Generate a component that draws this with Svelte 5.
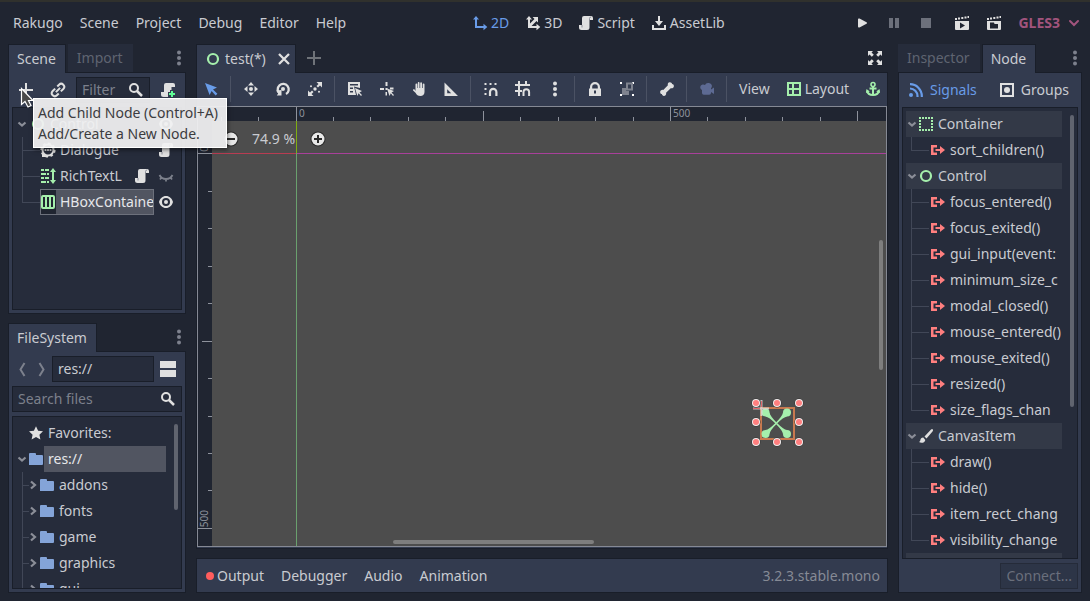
<script>
  const icons = {
    d2: '<path d="M4 1 1 4.500h2V13h8.500v2.200L15.300 12l-3.800-3.200V11H5V4.500h2z"/>',
    d3: '<path d="M4 1 1 4.500h2V13h8.500v2.200L15.300 12l-3.800-3.200V11H6.500L11.500 6 13 7.500V2H7.600L9.500 3.900 5 8.400V4.500h2z"/>',
    script: '<path d="M6 1a2 2 0 0 0-2 2v7H1v2.500A2.500 2.500 0 0 0 3.500 15H9a2.500 2.500 0 0 0 2.500-2.500V5H15V3a2 2 0 0 0-2-2z"/><path d="M11.500 5V3.500A1.500 1.500 0 0 1 13 2M4 10v2.500" fill="none" stroke="#8d909b"/>',
    scriptAdd: '<path d="M6 1a2 2 0 0 0-2 2v7H1v2.500A2.500 2.500 0 0 0 3.500 15H8v-5h2V8h1.500V5H15V3a2 2 0 0 0-2-2z"/><path d="M11 9h2v2h2v2h-2v2h-2v-2H9v-2h2z" fill="#5fff97"/>',
    asset: '<path d="M7 1h2v5h3l-4 5-4-5h3zM1 10h2v3h10v-3h2v5H1z"/>',
    play: '<path d="M4 4.500a1 1 0 0 1 1.500-.9l7 3.600a.9.900 0 0 1 0 1.600l-7 3.600a1 1 0 0 1-1.500-.900z"/>',
    pause: '<path d="M3 3h4v10H3zM9 3h4v10H9z"/>',
    stop: '<path d="M3 3h10v10H3z"/>',
    film: '<path d="M1 3h2v2H1zM4 2.500h2v2H4zM7.300 2h2v2h-2zM10.500 1.500h2v2h-2zM13.500 1H15v2h-1.500z"/><path fill-rule="evenodd" d="M1 6h14v8a1 1 0 0 1-1 1H2a1 1 0 0 1-1-1zm5 1.500v6l5-3z"/>',
    filmFolder: '<path d="M1 3h2v2H1zM4 2.500h2v2H4zM7.300 2h2v2h-2zM10.500 1.500h2v2h-2zM13.500 1H15v2h-1.500z"/><path fill-rule="evenodd" d="M1 6h14v8a1 1 0 0 1-1 1H2a1 1 0 0 1-1-1zm3 1.500v6h8V9H8.500L8 7.500z"/>',
    chevron: '<path d="m4 6 4 4 4-4" fill="none" stroke="currentColor" stroke-width="2" stroke-linecap="round"/>',
    dots: '<circle cx="8" cy="2.500" r="2"/><circle cx="8" cy="8" r="2"/><circle cx="8" cy="13.500" r="2"/>',
    add: '<path d="M7 1h2v6h6v2H9v6H7V9H1V7h6z"/>',
    close: '<path d="m3 3 10 10M13 3 3 13" stroke="currentColor" stroke-width="2.300"/>',
    link: '<g fill="none" stroke="currentColor" stroke-width="2" transform="rotate(-45 8 8)"><path d="M7 5H3.500a3 3 0 0 0 0 6H6M10 5h2.500a3 3 0 0 1 0 6H9M5 8h6"/></g>',
    search: '<circle cx="6" cy="6" r="4" fill="none" stroke="currentColor" stroke-width="2"/><path d="m9 9 5 5" stroke="currentColor" stroke-width="2.500"/>',
    select: '<path d="m2 2 4.600 12 2-4 4 4.500 1.800-1.800L10 8.500l4-2z"/>',
    move: '<path d="m8 1 3 3.500H5zM8 15l3-3.500H5zM1 8l3.500 3V5zM15 8l-3.500 3V5z"/><circle cx="8" cy="8" r="2"/>',
    rotate: '<path d="M4.600 12.500A5.500 5.500 0 1 1 11 13.100" fill="none" stroke="currentColor" stroke-width="2.300"/><path d="M1 9.500 6.500 9v5.500H1.800l1.400-1.900z"/><circle cx="8" cy="8" r="2"/>',
    scale: '<path d="M9.500 1H15v5.500l-2-2-2 2L9.500 5l2-2zM6.500 15H1V9.500l2 2 2-2L6.500 11l-2 2z"/><circle cx="8" cy="8" r="1.700"/><circle cx="12" cy="10.800" r="1"/><circle cx="4" cy="5.200" r="1"/>',
    list: '<path fill-rule="evenodd" d="M1 1h12v6l-6-1.500L9 14H1zm2 2v1.500h8V3zm0 3.500V8h3V6.500zM3 10v1.500h3V10z"/><path d="m8 7 2.300 8 1.300-2.700L14 15l1-1-2.500-2.500L15 10z"/>',
    pivot: '<path d="M6.500 1h2v4h-2zM1 7h4v2H1zM6.500 7h2v2h-2zM11 6.500h3.500v2H11zM6.500 11h1.500v3.500H6.500z"/><path d="m8 7.500 2.500 7.500 1.300-2.700L14 15l1-1-2.500-2.500L15 10z"/>',
    hand: '<path d="M7.500 1c.600 0 1 .4 1 1v5h.7V2.200a.9.900 0 0 1 1.800 0V7h.7V3.400a.9.900 0 0 1 1.800 0V11c0 2.500-1.800 4-4 4-2.700 0-3.700-1-5-3.200L2.100 9.500c-.6-1 .7-1.900 1.500-1L4.500 10V3.400a.9.900 0 0 1 1.800 0V7h.5V2c0-.6.300-1 .7-1z"/>',
    ruler: '<path fill-rule="evenodd" d="M1.500 1.500V15H15zm2.700 6.700 4 4h-4z"/>',
    snap: '<path d="M1.500 2h2v2h-2zM1.500 7h2v2h-2zM6.500 2h2v2h-2zM11.500 2h2v2h-2zM1.500 12h2v2h-2z"/><path d="M7 15v-4a3.200 3.200 0 0 1 6.400 0v4" fill="none" stroke="currentColor" stroke-width="2.200"/>',
    grid: '<path d="M3 0h2v3h5V0h2v3h3v2H5v4h2v2H5v4H3v-4H0V9h3V5H0V3h3z"/><path d="M8.500 15v-4a2.800 2.800 0 0 1 5.600 0v4" fill="none" stroke="currentColor" stroke-width="2"/>',
    lock: '<path fill-rule="evenodd" d="M8 1a5 5 0 0 0-5 5v1.500H2V15h12V7.500h-1V6a5 5 0 0 0-5-5zm0 2.200A2.800 2.800 0 0 1 10.800 6v1.500H5.200V6A2.800 2.800 0 0 1 8 3.200zM7 9.500h2v3H7z"/>',
    group: '<path d="M1 1h2v2H1zM13 1h2v2h-2zM1 13h2v2H1zM13 13h2v2h-2z" fill="#fff"/><path fill="#7f838f" d="M3 7h4v3h3v4H3z"/><path fill="none" stroke="#7f838f" stroke-width="2" d="M8 2.500h5v6H8z"/>',
    bone: '<path d="M10.700 1.200c-1.600.2-2.300 1.700-1.800 3.100l-4.600 4.600C2.500 8.600.9 9.900 1.200 11.500c.1 1 1 1.500 1.700 1.600.1 1 .8 1.700 1.700 1.800 1.700.2 3-1.200 2.500-3.100l4.600-4.600c1.700.5 3.200-.8 3.200-2.300 0-1-.8-1.800-1.800-1.900-.2-1.100-1.200-1.900-2.400-1.800z"/>',
    camera: '<path d="M9 2a3.200 3.200 0 0 0-3 2.100A2.900 2.900 0 1 0 3 9v3a1.800 1.800 0 0 0 1.800 1.800h5.400A1.800 1.800 0 0 0 12 12v-1l3 2V6.500l-3 2V7.300A3.200 3.200 0 0 0 9 2z"/>',
    layout: '<path fill-rule="evenodd" d="M1 1h14v14H1zm2 2v4h3V3zm5 0v4h5V3zM3 9v4h3V9zm5 0v4h5V9z"/>',
    anchor: '<path d="M8 6v8M4.500 7.500h7M2 9.500c.5 3 3 4.500 6 4.500s5.500-1.500 6-4.500" fill="none" stroke="currentColor" stroke-width="2"/><circle cx="8" cy="3.500" r="2" fill="none" stroke="currentColor" stroke-width="1.600"/><path d="m1 12 .5-4 3.300 2.500zM15 12l-.5-4-3.300 2.500z"/>',
    expand: '<path d="M1 1h5L4.500 2.500l2.300 2.300-2 2L2.500 4.500 1 6zM15 1h-5l1.500 1.500-2.300 2.300 2 2 2.300-2.300L15 6zM1 15h5l-1.500-1.500 2.300-2.300-2-2-2.300 2.300L1 10zM15 15h-5l1.500-1.500-2.300-2.300 2-2 2.300 2.300L15 10z"/>',
    control: '<circle cx="8" cy="8" r="5" fill="none" stroke="#a5efac" stroke-width="2.200"/>',
    container: '<g fill="#a5efac"><path d="M1 1h2v2H1zM4 1h2v2H4zM7 1h2v2H7zM10 1h2v2h-2zM13 1h2v2h-2zM1 13h2v2H1zM4 13h2v2H4zM7 13h2v2H7zM10 13h2v2h-2zM13 13h2v2h-2zM1 4h2v2H1zM1 7h2v2H1zM1 10h2v2H1zM13 4h2v2h-2zM13 7h2v2h-2zM13 10h2v2h-2z"/></g>',
    brush: '<path d="M14.200 1c-.5 0-1 .4-1.400.8L6.500 8.600l2 2 6-7c.8-1.100.7-2.200-.3-2.600zM5.300 9.600C3.500 9.500 2.600 10.800 2.400 12c-.2 1.200-.8 1.800-1.400 2 2 1.500 5.800 1 6.300-2z"/>',
    dialogue: '<g fill="none" stroke="currentColor"><circle cx="8" cy="8" r="5.500" stroke-width="2"/><circle cx="8" cy="8" r="6.800" stroke-width="1.600" stroke-dasharray="2.700 2.600"/></g><circle cx="5.500" cy="8" r="1.100"/><circle cx="8" cy="8" r="1.100"/><circle cx="10.500" cy="8" r="1.100"/><path d="M2 10v5h5z"/>',
    rich: '<g fill="#a5efac"><path d="M1 1h3v2H1zM5 1h4v2H5zM1 5h5v2H1zM7 5h2v2H7zM1 9h3v2H1zM5 9h4v2H5zM1 13h5v2H1zM7 13h2v2H7zM12 4h2v8h-2zM13 0l3 4h-6zM13 16l3-4h-6z"/></g>',
    hbox: '<path fill="#a5efac" fill-rule="evenodd" d="M3 1h10a2 2 0 0 1 2 2v10a2 2 0 0 1-2 2H3a2 2 0 0 1-2-2V3a2 2 0 0 1 2-2zm0 2v10h2V3zm4 0v10h2V3zm4 0v10h2V3z"/>',
    eye: '<path fill-rule="evenodd" d="M8 2C4.500 2 2 4.500 1 8c1 3.500 3.500 6 7 6s6-2.500 7-6c-1-3.500-3.500-6-7-6zm0 2a4 4 0 1 1 0 8 4 4 0 0 1 0-8z"/><circle cx="8" cy="8" r="2"/>',
    eyeOff: '<path d="M1.500 7c1.500 3 4 4 6.500 4s5-1 6.500-4M3.500 9.500 2 11.500M8 11v2.500M12.500 9.500l1.500 2" fill="none" stroke="currentColor" stroke-width="1.800"/>',
    signal: '<path d="M1 3h6v2.500H3.500v5H7V13H1z"/><path d="M5.500 7H10V4l5 4-5 4V9H5.500z"/>',
    feed: '<circle cx="3" cy="13" r="2"/><path d="M2 6.500A7.500 7.500 0 0 1 9.500 14v1M2 2.200A11.800 11.800 0 0 1 13.800 14v1" fill="none" stroke="currentColor" stroke-width="2.200"/>',
    groups: '<path fill-rule="evenodd" d="M1 1h14v14H1zm2 2v10h10V3z"/><circle cx="8" cy="8" r="3"/>',
    folder: '<path d="M1 3a1 1 0 0 1 1-1h5a1 1 0 0 1 1 1v1h6a1 1 0 0 1 1 1v8a1 1 0 0 1-1 1H1z" fill="#84a4d8"/>',
    star: '<path d="m8 1.200 2.100 4.500 4.900.6-3.600 3.400 1 4.800L8 12.100l-4.400 2.400 1-4.800L1 6.300l4.900-.6z"/>',
    back: '<path d="M10.500 2 6.500 8.500l4 6.500" fill="none" stroke="currentColor" stroke-width="2"/>',
    forward: '<path d="m5.500 2 4 6.500-4 6.500" fill="none" stroke="currentColor" stroke-width="2"/>',
    split: '<path d="M0 0h16v7H0zM0 9h16v7H0z"/>',
    down: '<path d="m4.500 6.500 3.500 3 3.500-3" fill="none" stroke="#8b8e98" stroke-width="2.200"/>',
    right: '<path d="m6 4.500 4 3.500-4 3.500" fill="none" stroke="#8b8e98" stroke-width="2.200"/>',
    minusRound: '<circle cx="8" cy="8" r="7.500" fill="#2b2b2b"/><circle cx="8" cy="8" r="6.500" fill="#e8e8e8"/><path d="M4 7h8v2H4z" fill="#2b2b2b"/>',
    plusRound: '<circle cx="8" cy="8" r="7.500" fill="#2b2b2b"/><circle cx="8" cy="8" r="6.500" fill="#e8e8e8"/><path d="M7 4h2v3h3v2H9v3H7V9H4V7h3z" fill="#2b2b2b"/>'
  };

  const menus = ['Rakugo', 'Scene', 'Project', 'Debug', 'Editor', 'Help'];
  const views = [['d2', '2D'], ['d3', '3D'], ['script', 'Script'], ['asset', 'AssetLib']];
  const tools = [['select'], ['move', 'rotate', 'scale'], ['list', 'pivot', 'hand', 'ruler'], ['snap', 'grid', 'dots'], ['lock', 'group'], ['bone'], ['camera']];
  const folders = ['addons', 'fonts', 'game', 'graphics', 'gui'];
  const signals = [
    { name: 'Container', icon: 'container', items: ['sort_children()'] },
    { name: 'Control', icon: 'control', items: ['focus_entered()', 'focus_exited()', 'gui_input(event:', 'minimum_size_c', 'modal_closed()', 'mouse_entered()', 'mouse_exited()', 'resized()', 'size_flags_chan'] },
    { name: 'CanvasItem', icon: 'brush', items: ['draw()', 'hide()', 'item_rect_chang', 'visibility_change'] }
  ];

  const zoom = 0.749;
  const origin = { x: 97.5, y: 46.4 };
  const marks = (start) =>
    Array.from({ length: 80 }, (_, i) => i - 2)
      .map((k) => ({ at: Math.round(start + k * 50 * zoom), size: k % 10 === 0 ? 'major' : k % 5 === 0 ? 'mid' : 'minor', label: k % 10 === 0 ? k * 50 : null }))
      .filter((m) => m.at > 14);
  const handles = [[8, 7], [29, 7], [51, 7], [8, 26], [51, 26], [8, 46], [29, 46], [51, 46]];
  const bones = ['', 'translate(56.5 0) scale(-1 1)', 'translate(0 54.5) scale(1 -1)', 'translate(56.5 54.5) scale(-1 -1)'];
</script>

{#snippet icon(name)}
  <svg class="icon" viewBox="0 0 16 16" width="16" height="16" fill="currentColor" aria-hidden="true">{@html icons[name]}</svg>
{/snippet}

<div class="editor">
  <header>
    <nav>
      {#each menus as m}<button>{m}</button>{/each}
    </nav>
    <div class="views">
      {#each views as [i, label]}<button class:accent={label === '2D'}>{@render icon(i)}{label}</button>{/each}
    </div>
    <div class="run">
      <button class="tool" aria-label="Play">{@render icon('play')}</button>
      <button class="tool off" aria-label="Pause">{@render icon('pause')}</button>
      <button class="tool off" aria-label="Stop">{@render icon('stop')}</button>
      <button class="tool scene-run" aria-label="Play scene">{@render icon('film')}</button>
      <button class="tool" aria-label="Play custom scene">{@render icon('filmFolder')}</button>
      <button class="driver">GLES3{@render icon('chevron')}</button>
    </div>
  </header>

  <main>
    <aside class="left">
      <section class="dock">
        <div class="tabs">
          <button class="tab on">Scene</button>
          <button class="tab">Import</button>
          <button class="more" aria-label="Scene dock options">{@render icon('dots')}</button>
        </div>
        <div class="body">
          <div class="bar">
            <button class="tool" aria-label="Add node">{@render icon('add')}</button>
            <button class="tool" aria-label="Instance scene">{@render icon('link')}</button>
            <label class="field"><input placeholder="Filter" aria-label="Filter nodes" />{@render icon('search')}</label>
            <button class="tool end" aria-label="Attach script">{@render icon('scriptAdd')}</button>
          </div>
          <div class="tree">
            <div class="row">{@render icon('down')}{@render icon('control')}<span class="name">Control</span>{@render icon('eye')}</div>
            <div class="kids">
              <div class="row child">{@render icon('dialogue')}<span class="name">Dialogue</span>{@render icon('script')}</div>
              <div class="row child">{@render icon('rich')}<span class="name">RichTextL</span>{@render icon('script')}<span class="dim">{@render icon('eyeOff')}</span></div>
              <div class="row child picked"><span class="pick">{@render icon('hbox')}<span class="name">HBoxContaine</span></span>{@render icon('eye')}</div>
            </div>
          </div>
        </div>
      </section>

      <section class="dock">
        <div class="tabs">
          <button class="tab on">FileSystem</button>
          <button class="more" aria-label="FileSystem dock options">{@render icon('dots')}</button>
        </div>
        <div class="body">
          <div class="bar path">
            <button class="step" aria-label="Back">{@render icon('back')}</button>
            <button class="step" aria-label="Forward">{@render icon('forward')}</button>
            <label class="field"><input value="res://" aria-label="Path" /></label>
            <button class="tool" aria-label="Toggle split mode">{@render icon('split')}</button>
          </div>
          <label class="field search"><input placeholder="Search files" aria-label="Search files" />{@render icon('search')}</label>
          <div class="tree files">
            <div class="rows">
              <div class="row"><span class="blank"></span>{@render icon('star')}<span class="name">Favorites:</span></div>
              <div class="row root">{@render icon('down')}{@render icon('folder')}<span class="name current">res://</span></div>
              <div class="kids folders">
                {#each folders as f}
                  <div class="row child">{@render icon('right')}{@render icon('folder')}<span class="name">{f}</span></div>
                {/each}
              </div>
            </div>
            <div class="scroll"></div>
          </div>
        </div>
      </section>
    </aside>

    <div class="center">
      <section class="dock stage">
        <div class="tabs">
          <div class="tab on doc">{@render icon('control')}<span>test(*)</span><button class="x" aria-label="Close scene">{@render icon('close')}</button></div>
          <button class="plus" aria-label="New scene">{@render icon('add')}</button>
          <button class="more wide" aria-label="Distraction free mode">{@render icon('expand')}</button>
        </div>
        <div class="body">
          <div class="toolbar">
            {#each tools as set}
              {#each set as t}<button class="tool tool-{t}" aria-label={t}>{@render icon(t)}</button>{/each}
              <i class="sep"></i>
            {/each}
            <button>View</button>
            <button><span class="green">{@render icon('layout')}</span>Layout</button>
            <button class="tool green" aria-label="Anchors">{@render icon('anchor')}</button>
          </div>
          <div class="canvas">
            <i class="axis-x"></i>
            <i class="axis-y"></i>
            <div class="ruler top">
              {#each marks(origin.x) as m}<i class={m.size} style="left: {m.at}px">{#if m.label !== null}<span>{m.label}</span>{/if}</i>{/each}
            </div>
            <div class="ruler side">
              {#each marks(origin.y) as m}<i class={m.size} style="top: {m.at}px">{#if m.label !== null}<span>{m.label}</span>{/if}</i>{/each}
            </div>
            <div class="zoom">
              <button aria-label="Zoom out">{@render icon('minusRound')}</button>
              <button class="level">74.9 %</button>
              <button aria-label="Zoom in">{@render icon('plusRound')}</button>
            </div>
            <svg class="node" width="60" height="56" viewBox="0 0 60 56" aria-hidden="true">
              <rect x="13" y="12" width="33" height="31" fill="none" stroke="#c8794f" stroke-width="2" />
              {#each bones as b}
                <g fill="#a5efac" transform={b}>
                  <circle cx="17.500" cy="16.500" r="4" />
                  <path d="M21.500 16.500Q22 20 28.800 26.700L27.700 27.800Q21 21 17.500 20.500z" />
                </g>
              {/each}
              <path d="M13.500 4v16M5 12.500h16" stroke="#ddd" stroke-width="2" opacity=".8" />
              <path d="M5 12.500h7M13.500 5v6" stroke="#e2686c" />
              {#each handles as [x, y]}
                <circle cx={x} cy={y} r="4.500" fill="#333" />
                <circle cx={x} cy={y} r="4" fill="#f4eeee" />
                <circle cx={x} cy={y} r="3" fill="#ff7f7f" />
              {/each}
            </svg>
            <i class="bar-h"></i>
            <i class="bar-v"></i>
          </div>
        </div>
      </section>
      <footer>
        <button class="output"><i></i>Output</button>
        <button>Debugger</button>
        <button>Audio</button>
        <button>Animation</button>
        <span>3.2.3.stable.mono</span>
      </footer>
    </div>

    <aside class="right">
      <section class="dock">
        <div class="tabs">
          <button class="tab">Inspector</button>
          <button class="tab on">Node</button>
          <button class="more" aria-label="Node dock options">{@render icon('dots')}</button>
        </div>
        <div class="body">
          <div class="bar modes">
            <button class="accent">{@render icon('feed')}Signals</button>
            <button>{@render icon('groups')}Groups</button>
          </div>
          <div class="tree signals">
            <div class="rows">
              {#each signals as s}
                <div class="row head">{@render icon('down')}{@render icon(s.icon)}<span class="name">{s.name}</span></div>
                <div class="kids">
                  {#each s.items as item}
                    <div class="row child"><span class="red">{@render icon('signal')}</span><span class="name">{item}</span></div>
                  {/each}
                </div>
              {/each}
              <div class="row head"></div>
            </div>
            <div class="scroll"></div>
          </div>
          <button class="connect" disabled>Connect...</button>
        </div>
      </section>
    </aside>
  </main>

  <div class="tooltip" role="tooltip">Add Child Node (Control+A)<br />Add/Create a New Node.</div>
  <svg class="pointer" width="16" height="22" viewBox="0 0 16 22" aria-hidden="true">
    <path d="M1.500 1.500v16l3.500-3 3 5.500 3-1.500-2.500-5h4.500z" fill="#4a4a4a" stroke="#fff" stroke-width="1.200" />
  </svg>
</div>

<style>
  :global(body) { background: #202531; }
  .editor {
    --base: #333b4f;
    --dark: #262c3b;
    --edge: #191e29;
    --text: #c9cbd1;
    position: relative;
    box-sizing: border-box;
    height: 100vh;
    display: flex;
    flex-direction: column;
    padding: 0 8px 8px;
    border-top: 2px solid #30312d;
    background: #202531;
    color: var(--text);
    font: 14px/20px "Noto Sans", sans-serif;
    overflow: hidden;
  }
  .editor *, .editor *::before { box-sizing: border-box; }
  button, input { font: inherit; color: inherit; background: none; border: 0; padding: 0; margin: 0; }
  button { display: inline-flex; align-items: center; justify-content: center; gap: 3px; padding: 0 6px; height: 28px; white-space: nowrap; }
  .icon { flex: none; display: block; color: #e0e0e0; }
  .accent, .accent .icon, .tool-select .icon { color: #699ce8; }
  .green .icon { color: #a5efac; }
  .red .icon { color: #ff7f7f; }
  .dim .icon { color: #7c808b; }
  .off .icon { color: #6c707b; }
  .tool { width: 28px; padding: 0; flex: none; }

  header { display: flex; justify-content: space-between; align-items: center; height: 42px; flex: none; }
  header nav, .views, .run { display: flex; gap: 4px; }
  header nav { margin-left: -1px; gap: 5px; }
  .views { margin-right: 4px; }
  .scene-run { margin-left: 4px; }
  .driver { gap: 6px; color: #a2547d; font-weight: 700; padding: 0 0 0 6px; }
  .driver .icon { color: #a2547d; }

  main { flex: 1; min-height: 0; display: grid; grid-template-columns: 178px minmax(0, 1fr) 184px; gap: 10px; }
  aside, .center { display: flex; flex-direction: column; gap: 9px; min-height: 0; min-width: 0; }
  .dock { flex: 1 1 0; min-height: 0; display: flex; flex-direction: column; }
  .tabs { display: flex; height: 28px; flex: none; gap: 2px; }
  .tab { height: 28px; padding: 0 10px 0 9px; background: var(--dark); color: #5f6471; }
  .tab.on { position: relative; height: 29px; background: var(--base); color: var(--text); border: 1px solid var(--edge); border-bottom: 0; padding: 0 9px 0 8px; z-index: 1; }
  .more { margin-left: auto; width: 14px; padding: 0; }
  .more .icon { color: #7d818d; }
  .more.wide { width: 26px; }
  .more.wide .icon { color: #e0e0e0; }
  .tab.doc { display: flex; align-items: center; gap: 4px; padding-right: 3px; }
  .doc .x { margin-left: 6px; padding: 0; width: 16px; }
  .plus { padding: 0 8px; }
  .plus .icon { color: #6f7379; }
  .body { flex: 1; min-height: 0; display: flex; flex-direction: column; gap: 4px; padding: 4px 3px 3px; background: var(--base); border: 1px solid var(--edge); }

  .bar { display: flex; align-items: center; height: 26px; flex: none; gap: 4px; }
  .bar .end { margin-left: auto; }
  .field { flex: 1; min-width: 0; display: flex; align-items: center; height: 26px; padding: 0 5px; background: var(--dark); border: 1px solid var(--edge); }
  .field input { flex: 1; min-width: 0; width: 0; outline: 0; }
  .field input::placeholder { color: #7c808b; opacity: 1; }
  .search { flex: none; }
  .path { gap: 0; }
  .step { width: 20px; padding: 0; }
  .step .icon { color: #7d818d; }

  .tree { flex: 1; min-height: 0; overflow: hidden; padding: 3px 3px 0 1px; background: var(--dark); border: 1px solid var(--edge); }
  .row { display: flex; align-items: center; height: 26px; }
  .name { flex: 1; min-width: 0; padding-left: 4px; white-space: nowrap; overflow: hidden; line-height: 26px; }
  .row > .icon:last-child, .row > .dim { margin: 0 4px 0 8px; }
  .kids { position: relative; }
  .kids::before { content: ""; position: absolute; left: 8px; top: 0; bottom: 13px; width: 1px; background: #414757; }
  .child { padding-left: 26px; position: relative; }
  .child::before { content: ""; position: absolute; left: 8px; top: 13px; width: 18px; height: 1px; background: #414757; }
  .pick { flex: 1; min-width: 0; display: flex; align-items: center; height: 26px; border: 1px solid #6d717c; background: linear-gradient(90deg, #202531 15px, #515561 15px); color: #e6e7ea; }
  .pick .icon { margin-left: -1px; }
  .row.picked > .icon { margin-left: 4px; }

  .files, .signals { display: flex; padding-right: 3px; }
  .rows { flex: 1; min-width: 0; }
  .blank { width: 14px; }
  .files .current { background: #515561; color: #e6e7ea; }
  .files .row > .icon:first-child, .signals .head > .icon:first-child { margin-right: -2px; }
  .folders .child { padding-left: 11px; }
  .folders .child::before { width: 7px; }
  .folders::before { bottom: 0; }
  .scroll { flex: none; width: 4px; height: 86px; margin: 4px 0 0 8px; border-radius: 2px; background: #60646f; }
  .signals { padding-left: 3px; }
  .signals .row.head { background: #333947; }
  .signals .row > .icon:first-child { margin-left: -2px; }
  .signals .child { padding-left: 24px; }
  .signals .kids::before, .signals .child::before { left: 5px; }
  .signals .scroll { height: 292px; }
  .modes { justify-content: space-between; padding-right: 3px; }
  .modes button { gap: 6px; }
  .connect { align-self: flex-end; height: 26px; padding: 0 5px; background: #2d3547; border: 1px solid #252b39; color: #6a6f7c; }

  .stage .body { padding: 0 0 1px; gap: 0; }
  .toolbar { display: flex; align-items: center; gap: 4px; height: 33px; padding-bottom: 1px; flex: none; }
  .sep { flex: none; width: 4px; height: 26px; background: linear-gradient(90deg, transparent 1px, #4b5264 1px 2px, transparent 2px); }
  .tool-camera .icon { color: #5d6a93; }
  .canvas { position: relative; flex: 1; min-height: 0; overflow: hidden; border: 1px solid #858994; background: #4d4d4d; }
  .canvas > * { position: absolute; }
  .ruler { background: #202531; overflow: hidden; color: #8e929c; font-size: 10px; line-height: 10px; }
  .ruler i { position: absolute; background: #8e929c; font-style: normal; }
  .ruler.top { left: 0; right: 0; top: 0; height: 14px; }
  .ruler.side { left: 0; top: 0; bottom: 0; width: 14px; }
  .top i { bottom: 0; width: 1px; height: 4px; }
  .top .mid { height: 10px; }
  .top .major { height: 14px; }
  .top span { position: absolute; left: 3px; top: 1px; }
  .side i { right: 0; height: 1px; width: 4px; }
  .side .mid { width: 10px; }
  .side .major { width: 14px; }
  .side span { position: absolute; left: 1px; bottom: 2px; writing-mode: vertical-rl; transform: rotate(180deg); }
  .axis-x { left: 0; right: 0; top: 46px; height: 1px; background: linear-gradient(90deg, #b83c52 98px, #a8409a 98px); }
  .axis-y { left: 98px; top: 0; bottom: 0; width: 1px; background: linear-gradient(#7fae12 46px, #6aa06e 46px); }
  .zoom { left: 24px; top: 18px; display: flex; align-items: center; }
  .zoom button { padding: 0 1px; }
  .zoom .level { padding: 0 14px 0 12px; }
  .node { left: 550px; top: 289px; }
  .bar-h { left: 28.300%; width: 29.300%; bottom: 2px; height: 4px; border-radius: 2px; background: #7e7e7e; }
  .bar-v { right: 3px; top: 30.200%; height: 29.600%; width: 4px; border-radius: 2px; background: #7e7e7e; }

  footer { display: flex; align-items: center; gap: 5px; height: 35px; flex: none; padding: 0 7px 0 3px; background: var(--base); border: 1px solid var(--edge); }
  footer i { width: 8px; height: 8px; border-radius: 50%; background: #ff5d5d; }
  footer span { margin-left: auto; color: #868a95; }

  .tooltip { position: absolute; left: 33px; top: 96px; z-index: 2; padding: 3px 8px 3px 4px; border: 1px solid #fff; background: rgb(240 240 241 / 94%); color: #3c3c3f; line-height: 21px; box-shadow: 1px 2px 4px rgb(0 0 0 / 50%); white-space: nowrap; }
  .pointer { position: absolute; left: 20px; top: 85px; z-index: 3; }
</style>
